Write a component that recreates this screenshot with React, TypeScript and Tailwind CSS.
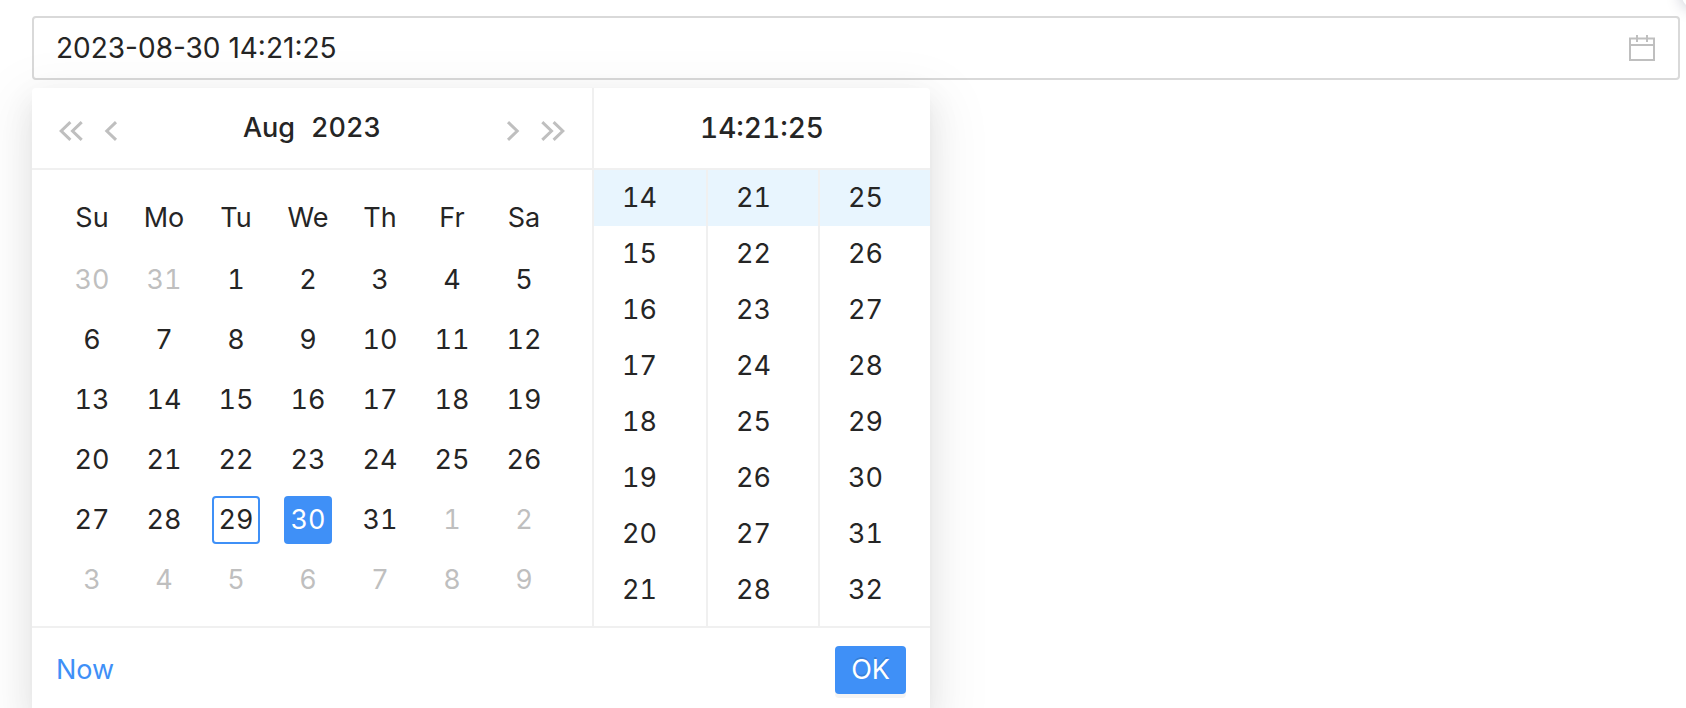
const WEEKDAYS = ["Su", "Mo", "Tu", "We", "Th", "Fr", "Sa"];

// August 2023 starts on a Tuesday; six weeks from Sunday, July 30.
const WEEKS = Array.from({ length: 6 }, (_, week) =>
  Array.from({ length: 7 }, (_, day) => {
    const date = new Date(2023, 6, 30 + week * 7 + day);
    const current = date.getMonth() === 7;
    return {
      label: date.getDate(),
      current,
      today: current && date.getDate() === 29,
      selected: current && date.getDate() === 30,
    };
  }),
);

const TIME_COLUMNS = [
  { name: "Hour", start: 14, width: "w-[114px]" },
  { name: "Minute", start: 21, width: "w-[112px]" },
  { name: "Second", start: 25, width: "w-[110px]" },
];

function Chevron({ double = false, flip = false }: { double?: boolean; flip?: boolean }) {
  return (
    <svg
      viewBox="0 0 24 20"
      className={flip ? "h-5 w-6 -scale-x-100" : "h-5 w-6"}
      fill="none"
      stroke="currentColor"
      strokeWidth="3"
      aria-hidden="true"
    >
      {double ? <path d="M11.4 1.1 2.2 10l9.2 8.9M22.7 1.1 13.5 10l9.2 8.9" /> : <path d="M17 1.1 7.8 10l9.2 8.9" />}
    </svg>
  );
}

function CalendarIcon() {
  return (
    <svg viewBox="0 0 28 28" className="size-7" fill="none" stroke="currentColor" strokeWidth="2" aria-hidden="true">
      <path d="M2 4.5h24V26H2zM2 11h24M9 1v7M19 1v7" />
    </svg>
  );
}

function dayClass(day: { current: boolean; today: boolean; selected: boolean }) {
  if (day.selected) return "bg-[#3f90f7] text-white";
  if (day.today) return "border-2 border-[#3f90f7] text-[#252525]";
  return day.current ? "text-[#252525]" : "text-[#bfbfbf]";
}

export default function App() {
  return (
    <main className="relative h-screen overflow-hidden bg-white pt-4 pr-1.5 pl-8 font-['Inter',sans-serif] text-[27px] text-[#252525]">
      <div className="absolute -top-8 -right-9 size-10 rounded-xl bg-white shadow-[0_0_16px_rgba(0,20,60,0.25)]" />

      <label className="flex h-16 items-center rounded-sm border-2 border-[#d9d9d9] bg-white px-[22px]">
        <input
          aria-label="Date and time"
          defaultValue="2023-08-30 14:21:25"
          className="min-w-0 flex-1 bg-transparent text-[28px] outline-none"
        />
        <span className="text-[#bfbfbf]">
          <CalendarIcon />
        </span>
      </label>

      <section
        aria-label="Choose date and time"
        className="relative mt-2 w-[898px] rounded-sm bg-white tabular-nums shadow-[0_6px_12px_-8px_rgba(0,0,0,0.12),0_12px_32px_rgba(0,0,0,0.08),0_18px_56px_16px_rgba(0,0,0,0.05)]"
      >
        <div className="flex border-b-2 border-[#f0f0f0]">
          <div className="w-[562px] border-r-2 border-[#f0f0f0]">
            <header className="flex h-[82px] items-center justify-between border-b-2 border-[#f0f0f0] px-[27px]">
              <div className="flex gap-4 pt-1.5 text-[#bfbfbf]">
                <button type="button" aria-label="Previous year"><Chevron double /></button>
                <button type="button" aria-label="Previous month"><Chevron /></button>
              </div>
              <div className="flex gap-4 font-medium">
                <button type="button">Aug</button>
                <button type="button">2023</button>
              </div>
              <div className="flex gap-4 pt-1.5 text-[#bfbfbf]">
                <button type="button" aria-label="Next month"><Chevron flip /></button>
                <button type="button" aria-label="Next year"><Chevron double flip /></button>
              </div>
            </header>
            <div className="py-4 pl-6">
              <table className="w-[504px] table-fixed border-collapse">
                <thead>
                  <tr className="h-16">
                    {WEEKDAYS.map((name) => (
                      <th key={name} scope="col" className="p-0 font-normal">{name}</th>
                    ))}
                  </tr>
                </thead>
                <tbody>
                  {WEEKS.map((week, i) => (
                    <tr key={i} className="h-[60px]">
                      {week.map((day, j) => (
                        <td key={j} className="p-0">
                          <button
                            type="button"
                            className={`mx-auto flex size-12 items-center justify-center rounded-sm ${dayClass(day)}`}
                          >
                            {day.label}
                          </button>
                        </td>
                      ))}
                    </tr>
                  ))}
                </tbody>
              </table>
            </div>
          </div>

          <div className="flex-1">
            <header className="flex h-[82px] items-center justify-center border-b-2 border-[#f0f0f0] text-[28px] font-medium">
              14:21:25
            </header>
            <div className="flex h-[456px]">
              {TIME_COLUMNS.map((column) => (
                <ul
                  key={column.name}
                  aria-label={column.name}
                  className={`${column.width} border-r-2 border-[#f0f0f0] last:border-r-0`}
                >
                  {Array.from({ length: 8 }, (_, i) => (
                    <li key={i}>
                      <button
                        type="button"
                        className={`flex h-14 w-full items-center pl-7 ${i === 0 ? "bg-[#e8f5fe]" : ""}`}
                      >
                        {column.start + i}
                      </button>
                    </li>
                  ))}
                </ul>
              ))}
            </div>
          </div>
        </div>

        <footer className="flex h-[84px] items-center justify-between px-6">
          <a href="#now" className="text-[#3f90f7]">Now</a>
          <button
            type="button"
            className="h-12 rounded-sm bg-[#3f90f7] px-4 text-white shadow-[0_4px_0_rgba(0,0,0,0.045)] text-shadow-[0_-2px_0_rgba(0,0,0,0.12)]"
          >
            OK
          </button>
        </footer>
      </section>
    </main>
  );
}
